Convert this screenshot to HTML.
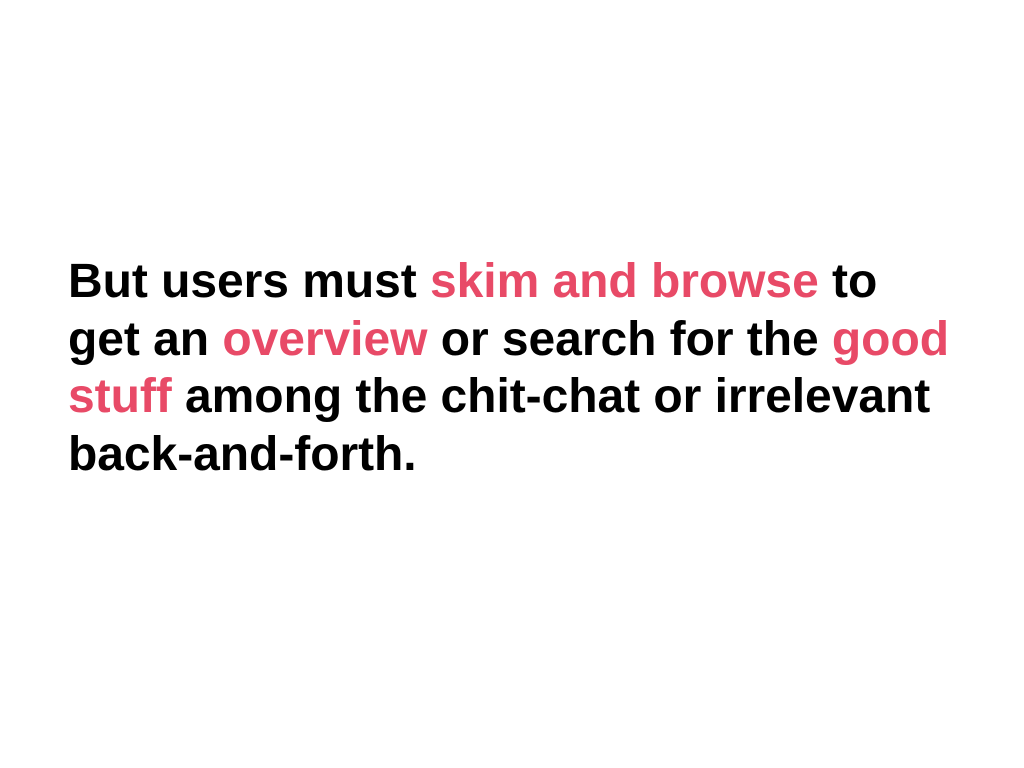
<!DOCTYPE html>
<html><head><style>
html,body{margin:0;padding:0;background:#fff;width:1024px;height:768px;overflow:hidden}
.t{position:absolute;left:68px;top:253px;font-family:"Liberation Sans",Arial,sans-serif;font-weight:bold;font-size:48px;line-height:57.5px;color:#000;white-space:nowrap;letter-spacing:-0.05px}
.r{color:#e84a67}
</style></head><body>
<div class="t">
<div>But users must <span class="r">skim and browse</span> to</div>
<div>get an <span class="r">overview</span> or search for the <span class="r">good</span></div>
<div><span class="r">stuff</span> among the chit-chat or irrelevant</div>
<div>back-and-forth.</div>
</div>
</body></html>
